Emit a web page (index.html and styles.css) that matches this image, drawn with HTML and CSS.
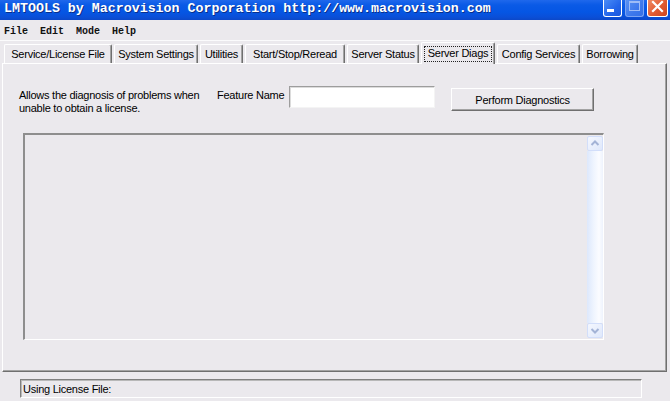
FILE: index.html
```html
<!DOCTYPE html>
<html>
<head>
<meta charset="utf-8">
<link rel="stylesheet" href="styles.css">
</head>
<body>
<div class="window">
  <div class="titlebar">
    <span class="title-text">LMTOOLS by Macrovision Corporation http://www.macrovision.com</span>
    <div class="caption">
      <span class="cbtn cbtn-min"><svg width="19" height="17" viewBox="0 0 19 17"><rect x="4" y="10" width="7" height="3" fill="#fff"/></svg></span>
      <span class="cbtn cbtn-max"><svg width="19" height="17" viewBox="0 0 19 17"><rect x="4.5" y="2.5" width="10" height="9" fill="none" stroke="#9ebcf6" stroke-width="1"/><rect x="4" y="2" width="11" height="2" fill="#9ebcf6"/></svg></span>
      <span class="cbtn cbtn-close"><svg width="21" height="17" viewBox="0 0 21 17"><path d="M6 3 L15 12 M15 3 L6 12" stroke="#fff" stroke-width="2.2" stroke-linecap="square"/></svg></span>
    </div>
  </div>
  <div class="menubar">
    <span class="menu-item">File</span>
    <span class="menu-item">Edit</span>
    <span class="menu-item">Mode</span>
    <span class="menu-item">Help</span>
  </div>
  <div class="tabstrip">
    <div class="tab">Service/License File</div>
    <div class="tab">System Settings</div>
    <div class="tab">Utilities</div>
    <div class="tab">Start/Stop/Reread</div>
    <div class="tab">Server Status</div>
    <div class="tab tab-active"><span class="focus">Server Diags</span></div>
    <div class="tab">Config Services</div>
    <div class="tab">Borrowing</div>
  </div>
  <div class="panel">
    <div class="form-row">
      <p class="desc">Allows the diagnosis of problems when<br>unable to obtain a license.</p>
      <span class="label">Feature Name</span>
      <div class="input"></div>
      <button class="btn">Perform Diagnostics</button>
    </div>
    <div class="output">
      <div class="scrollbar">
        <div class="sbtn"><svg width="14" height="13" viewBox="0 0 14 13"><path d="M3.5 8 L7 4.5 L10.5 8" fill="none" stroke="#a3b3d6" stroke-width="2"/></svg></div>
        <div class="track"></div>
        <div class="sbtn"><svg width="14" height="13" viewBox="0 0 14 13"><path d="M3.5 5 L7 8.5 L10.5 5" fill="none" stroke="#a3b3d6" stroke-width="2"/></svg></div>
      </div>
    </div>
  </div>
  <div class="statusbar">
    <div class="statusbox">Using License File:</div>
  </div>
</div>
</body>
</html>
```
FILE: styles.css
```css
html, body {
  margin: 0;
  padding: 0;
}
body {
  width: 670px;
  height: 401px;
  overflow: hidden;
  background: #ebe9ed;
  font-family: "Liberation Sans", Arial, sans-serif;
  font-size: 11px;
  letter-spacing: -0.25px;
  color: #000;
}
.window {
  width: 670px;
  height: 401px;
  display: flex;
  flex-direction: column;
}
.titlebar {
  height: 20px;
  display: flex;
  align-items: flex-start;
  justify-content: space-between;
  background: linear-gradient(#1f68ec 0%, #0a5ae6 25%, #0556e4 60%, #0a4fd8 85%, #0c48c8 100%);
}
.title-text {
  font-family: "Liberation Mono", "Courier New", monospace;
  font-weight: bold;
  font-size: 13.3px;
  letter-spacing: 0;
  line-height: 18px;
  color: #fff;
  padding-left: 4px;
  white-space: nowrap;
  text-shadow: 1px 1px 0 #0a2f8a;
}
.caption {
  display: flex;
  gap: 3px;
  padding-right: 2px;
}
.cbtn {
  display: block;
  height: 17px;
  box-sizing: border-box;
  border: 1px solid #fff;
  border-top: none;
  border-radius: 0 0 3px 3px;
  line-height: 0;
}
.cbtn svg {
  display: block;
  margin: -1px 0 0 -1px;
}
.cbtn-min {
  width: 19px;
  background: linear-gradient(135deg, #4a8cf6 0%, #2365ea 60%, #1c58dc 100%);
}
.cbtn-max {
  width: 19px;
  border-color: #7aa3f3;
  background: linear-gradient(135deg, #5a91f2 0%, #3d78ec 60%, #3470e6 100%);
}
.cbtn-close {
  width: 21px;
  background: linear-gradient(135deg, #f08a62 0%, #e05a32 55%, #cc4420 100%);
}
.menubar {
  height: 20px;
  display: flex;
  align-items: center;
  gap: 12px;
  padding-left: 4px;
  border-bottom: 1px solid #fbfbfc;
  box-sizing: content-box;
}
.menu-item {
  font-family: "Liberation Mono", "Courier New", monospace;
  font-size: 10px;
  font-weight: bold;
  letter-spacing: 0;
  line-height: 12px;
  padding-top: 3px;
  color: #111;
}
.tabstrip {
  margin-top: 1px;
  height: 21px;
  display: flex;
  align-items: flex-end;
  padding-left: 2px;
}
.tab {
  height: 19px;
  box-sizing: border-box;
  margin-left: 2px;
  border-top: 1px solid #fff;
  border-left: 1px solid #fff;
  border-right: 1px solid #6f6f6f;
  box-shadow: inset -1px 0 0 #a3a3a3;
  border-radius: 2px 2px 0 0;
  text-align: center;
  line-height: 19px;
  white-space: nowrap;
  background: #ebe9ed;
}
.tab:nth-child(1) { width: 108px; }
.tab:nth-child(2) { width: 84px; }
.tab:nth-child(3) { width: 43px; }
.tab:nth-child(4) { width: 100px; }
.tab:nth-child(5) { width: 72px; }
.tab:nth-child(6) { width: 74px; }
.tab:nth-child(7) { width: 83px; }
.tab:nth-child(8) { width: 56px; }
.tab-active {
  height: 22px;
  margin-bottom: -1px;
  position: relative;
  z-index: 1;
  line-height: 18px;
  padding-top: 1px;
}
.focus {
  display: inline-block;
  border: 1px dotted #222;
  line-height: 13px;
  padding: 0 2px 1px;
  width: 68px;
  box-sizing: border-box;
}
.panel {
  margin-left: 2px;
  width: 665px;
  height: 309px;
  box-sizing: border-box;
  border-top: 1px solid #fff;
  border-left: 1px solid #fff;
  border-right: 1px solid #6f6f6f;
  border-bottom: 1px solid #6f6f6f;
  box-shadow: inset -1px -1px 0 #a3a3a3;
  display: flex;
  flex-direction: column;
}
.form-row {
  height: 69px;
  box-sizing: border-box;
  padding: 22px 0 0 16px;
  display: flex;
  align-items: flex-start;
}
.desc {
  margin: 3px 0 0 0;
  width: 198px;
  flex: none;
  line-height: 13px;
}
.label {
  margin-top: 3px;
  width: 72px;
  flex: none;
  line-height: 13px;
  white-space: nowrap;
}
.input {
  width: 146px;
  height: 22px;
  box-sizing: border-box;
  flex: none;
  background: #fff;
  border: 1px solid;
  border-color: #9d9d9d #f4f4f4 #f4f4f4 #9d9d9d;
  box-shadow: inset 1px 1px 0 #dcdcdc;
}
.btn {
  margin: 2px 0 0 16px;
  width: 143px;
  height: 23px;
  box-sizing: border-box;
  flex: none;
  padding: 0;
  font-family: "Liberation Sans", Arial, sans-serif;
  font-size: 11px;
  letter-spacing: -0.25px;
  color: #000;
  background: #ebe9ed;
  border: 1px solid;
  border-color: #fff #6f6f6f #6f6f6f #fff;
  box-shadow: inset -1px -1px 0 #a3a3a3;
}
.output {
  margin-left: 20px;
  width: 581px;
  height: 207px;
  box-sizing: border-box;
  border: 2px solid;
  border-color: #8e8e8e #fff #fff #8e8e8e;
  border-width: 2px 1px 1px 2px;
  display: flex;
  justify-content: flex-end;
  padding: 1px 0 1px 0;
}
.scrollbar {
  width: 16px;
  display: flex;
  flex-direction: column;
}
.sbtn {
  height: 15px;
  box-sizing: border-box;
  border: 1px solid #d2defa;
  border-radius: 2px;
  background: linear-gradient(135deg, #f4f7fe 0%, #dfe8fb 100%);
  line-height: 0;
}
.sbtn svg { display: block; }
.track {
  flex: 1;
  background: linear-gradient(to right, #dde8fc 0%, #eef4fe 40%, #fbfcff 75%, #eef3fd 100%);
}
.statusbar {
  flex: 1;
  padding: 7px 0 0 20px;
}
.statusbox {
  width: 622px;
  height: 19px;
  box-sizing: border-box;
  border: 1px solid;
  border-color: #808080 #fff #fff #808080;
  box-shadow: inset 1px 1px 0 #b8b8b8;
  padding-left: 2px;
  line-height: 18px;
  white-space: nowrap;
}
```
